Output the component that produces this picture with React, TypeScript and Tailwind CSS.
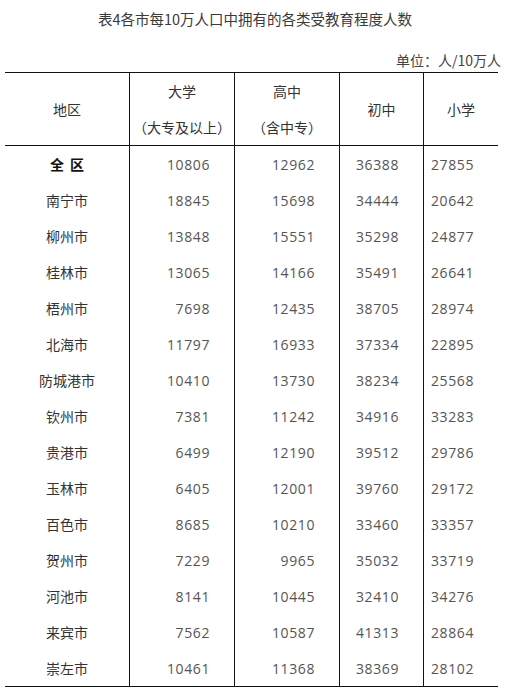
import React from "react";

const rows: [string, string, string, string, string][] = [
  ["全区", "10806", "12962", "36388", "27855"],
  ["南宁市", "18845", "15698", "34444", "20642"],
  ["柳州市", "13848", "15551", "35298", "24877"],
  ["桂林市", "13065", "14166", "35491", "26641"],
  ["梧州市", "7698", "12435", "38705", "28974"],
  ["北海市", "11797", "16933", "37334", "22895"],
  ["防城港市", "10410", "13730", "38234", "25568"],
  ["钦州市", "7381", "11242", "34916", "33283"],
  ["贵港市", "6499", "12190", "39512", "29786"],
  ["玉林市", "6405", "12001", "39760", "29172"],
  ["百色市", "8685", "10210", "33460", "33357"],
  ["贺州市", "7229", "9965", "35032", "33719"],
  ["河池市", "8141", "10445", "32410", "34276"],
  ["来宾市", "7562", "10587", "41313", "28864"],
  ["崇左市", "10461", "11368", "38369", "28102"],
];

const font = { fontFamily: '"Noto Sans CJK SC", "Noto Sans", sans-serif' };
const numFont = { fontFamily: '"Open Sans", "Noto Sans CJK SC", sans-serif' };

export default function App() {
  return (
    <div className="w-[510px] h-[696px] bg-white overflow-hidden" style={font}>
      <div className="h-[38px] flex items-center justify-center text-[14.5px] text-[#3a3a3a]">
        表4各市每10万人口中拥有的各类受教育程度人数
      </div>
      <div className="h-[34px] flex items-center justify-end pr-[9px] pt-[11px] text-[14px] text-[#444]">
        单位：人/10万人
      </div>
      <div className="ml-[5px] w-[493px] border-t border-b border-[#111]">
        <div className="grid grid-cols-[124px_105px_105px_84px_75px] h-[73px] border-b border-[#111] text-[14px] text-[#333]">
          <div className="flex items-center justify-center">地区</div>
          <div className="border-l border-[#111] flex flex-col items-center justify-center leading-[36px]">
            <span>大学</span>
            <span>（大专及以上）</span>
          </div>
          <div className="border-l border-[#111] flex flex-col items-center justify-center leading-[36px]">
            <span>高中</span>
            <span>（含中专）</span>
          </div>
          <div className="border-l border-[#111] flex items-center justify-center">初中</div>
          <div className="border-l border-[#111] flex items-center justify-center">小学</div>
        </div>
        {rows.map((r, i) => (
          <div key={i} className="grid grid-cols-[124px_105px_105px_84px_75px] h-[36px]">
            {i === 0 ? (
              <div className="flex items-center justify-center gap-[6px] text-[14px] font-bold text-[#111]">
                <span>全</span>
                <span>区</span>
              </div>
            ) : (
              <div className="flex items-center justify-center text-[14px] text-[#333]">{r[0]}</div>
            )}
            {r.slice(1).map((v, j) => (
              <div
                key={j}
                className="border-l border-[#111] flex items-center justify-end pr-[24px] text-[14px] tracking-[0.6px] text-[#555]"
                style={numFont}
              >
                {v}
              </div>
            ))}
          </div>
        ))}
      </div>
    </div>
  );
}
